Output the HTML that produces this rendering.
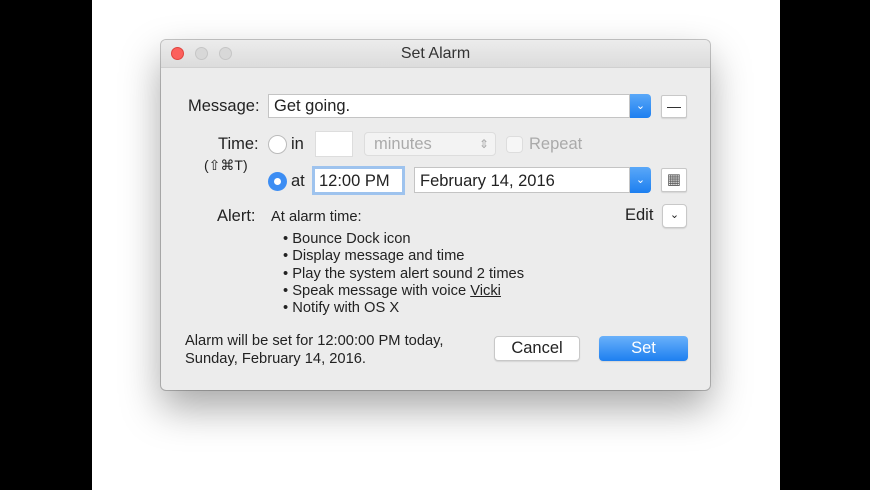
<!DOCTYPE html>
<html><head><style>
*{margin:0;padding:0;box-sizing:border-box}
body{width:870px;height:490px;background:#000;position:relative;overflow:hidden;font-family:"Liberation Sans",sans-serif;color:#222}
.page{position:absolute;left:92px;top:0;width:688px;height:490px;background:#fff}
.win{position:absolute;left:161px;top:40px;width:549px;height:350px;background:#ececec;border-radius:5px;box-shadow:0 18px 40px rgba(0,0,0,.35),0 0 0 1px #c8c8c8}
.tb{height:28px;border-bottom:1px solid #d0d0d0;background:linear-gradient(#ececec,#dcdcdc);border-radius:5px 5px 0 0;text-align:center;font-size:16px;line-height:28px;color:#333}
.dot{position:absolute;top:7px;width:13px;height:13px;border-radius:50%;background:#d8d8d8;border:1px solid #c6c6c6}
.a{position:absolute;font-size:16.5px;white-space:nowrap}
.fld{position:absolute;background:#fff;border:1px solid #c4c4c4;font-size:16.5px;line-height:24px;padding-left:5px}
.blue{position:absolute;background:linear-gradient(#5aa8f8,#1d7ff0);border-radius:0 4px 4px 0;color:#fff;text-align:center;font-size:11px}
.btn{position:absolute;background:#fff;border:1px solid #c8c8c8;border-radius:4px;box-shadow:0 1px 1px rgba(0,0,0,.1)}
.rad{position:absolute;width:19px;height:19px;border-radius:50%}
.s{font-size:14.7px}
</style></head><body>
<div class="page"></div>
<div class="win">
<div class="tb">Set Alarm</div>
<div class="dot" style="left:10px;background:#fc605c;border-color:#e0443e"></div>
<div class="dot" style="left:34px"></div>
<div class="dot" style="left:58px"></div>

<div class="a" style="left:27px;top:57px">Message:</div>
<div class="fld" style="left:107px;top:54px;width:362px;height:24px;line-height:23px">Get going.</div>
<div class="blue" style="left:469px;top:54px;width:21px;height:24px;line-height:24px">&#8964;</div>
<div class="btn" style="left:500px;top:55px;width:26px;height:23px;border-radius:2px;text-align:center;line-height:20px;font-size:14px">—</div>

<div class="a" style="left:57px;top:95px">Time:</div>
<div class="a" style="left:43px;top:117px;font-size:14px">(⇧⌘T)</div>
<div class="rad" style="left:107px;top:95px;background:#fff;border:1px solid #bbb"></div>
<div class="a" style="left:130px;top:95px">in</div>
<div class="fld" style="left:154px;top:91px;width:38px;height:26px;border-color:#ddd"></div>
<div class="btn" style="left:203px;top:92px;width:132px;height:24px;border-color:#ddd;box-shadow:none;background:#f3f3f3;color:#aaa;font-size:16.5px;line-height:23px;padding-left:9px">minutes<span style="position:absolute;right:6px;top:0;font-size:12px">⇕</span></div>
<div class="btn" style="left:345px;top:96px;width:17px;height:17px;border-color:#ddd;box-shadow:none;background:#f6f6f6"></div>
<div class="a" style="left:368px;top:95px;color:#aaa">Repeat</div>

<div class="rad" style="left:107px;top:132px;background:#3c8df3"><div style="position:absolute;left:6px;top:6px;width:7px;height:7px;border-radius:50%;background:#fff"></div></div>
<div class="a" style="left:130px;top:132px">at</div>
<div class="fld" style="left:151px;top:126px;width:93px;height:29px;border:3px solid #9ec3ee;line-height:24px;padding-left:4px">12:00 PM</div>
<div class="fld" style="left:253px;top:127px;width:216px;height:26px;line-height:27px">February 14, 2016</div>
<div class="blue" style="left:469px;top:127px;width:21px;height:26px;line-height:26px">&#8964;</div>
<div class="btn" style="left:500px;top:128px;width:26px;height:24px;border-radius:2px;text-align:center;line-height:22px;font-size:15px;color:#555">▦</div>

<div class="a" style="left:56px;top:167px">Alert:</div>
<div class="a s" style="left:110px;top:169px">At alarm time:</div>
<div class="a" style="left:464px;top:166px">Edit</div>
<div class="btn" style="left:501px;top:164px;width:25px;height:24px;text-align:center;line-height:20px;font-size:11px">&#8964;</div>
<div class="a s" style="left:122px;top:191px;line-height:17.3px">• Bounce Dock icon<br>• Display message and time<br>• Play the system alert sound 2 times<br>• Speak message with voice <u>Vicki</u><br>• Notify with OS X</div>

<div class="a s" style="left:24px;top:292px;line-height:18px">Alarm will be set for 12:00:00 PM today,<br>Sunday, February 14, 2016.</div>
<div class="btn" style="left:333px;top:296px;width:86px;height:25px;text-align:center;line-height:23px;font-size:16.5px">Cancel</div>
<div class="btn" style="left:438px;top:296px;width:89px;height:25px;border:none;background:linear-gradient(#6ab1fa,#1d7ff0);color:#fff;text-align:center;line-height:25px;font-size:16.5px">Set</div>
</div>
</body></html>
